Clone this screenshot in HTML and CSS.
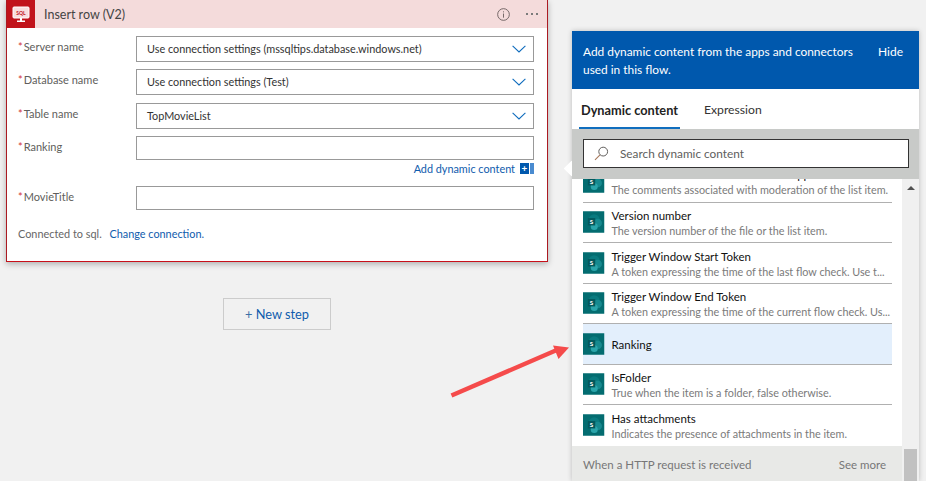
FILE: index.html
```html
<!DOCTYPE html>
<html lang="en">
<head>
<meta charset="utf-8">
<title>Insert row (V2)</title>
<link rel="stylesheet" href="styles.css">
</head>
<body>
<svg class="defs" width="0" height="0" aria-hidden="true">
  <symbol id="sp" viewBox="0 0 22 22">
    <rect width="22" height="22" fill="#036c70"/>
    <circle cx="11.5" cy="8.5" r="5.5" fill="#0a7a7f"/>
    <circle cx="15" cy="12" r="4.4" fill="#16898f"/>
    <circle cx="11.5" cy="15.5" r="3.6" fill="#2aa5ab"/>
    <rect x="5" y="7" width="7.5" height="7.5" fill="#04585c"/>
    <text x="8.7" y="13" class="sp-letter">S</text>
  </symbol>
  <symbol id="chev" viewBox="0 0 14 8">
    <path d="M.6.8 7 7 13.4.8" fill="none" stroke="#0f6cbd" stroke-width="1.1"/>
  </symbol>
</svg>
<div class="page">
  <main class="canvas">
    <section class="card">
      <header class="card-head">
        <div class="card-icon">
          <svg width="18" height="17" viewBox="0 0 18 17">
            <rect x="1" y="1" width="16" height="11" rx="1" fill="#f8dede" stroke="#fff"/>
            <text x="9" y="8.7" class="sql">SQL</text>
            <path d="M8 12h2v2.4h3V16H5v-1.6h3z" fill="#fff"/>
          </svg>
        </div>
        <h1 class="card-title">Insert row (V2)</h1>
        <svg class="info" width="13" height="13" viewBox="0 0 14 14">
          <circle cx="7" cy="7" r="6.3" fill="none" stroke="#6b5f5f"/>
          <path d="M7 6v4.4M7 3.6v1.1" stroke="#6b5f5f" fill="none"/>
        </svg>
        <div class="more"><i></i><i></i><i></i></div>
      </header>
      <div class="card-body">
        <div class="field gap7">
          <label class="label"><span class="req">*</span>Server name</label>
          <div class="input select"><span>Use connection settings (mssqltips.database.windows.net)</span><svg class="chev"><use href="#chev"/></svg></div>
        </div>
        <div class="field gap8">
          <label class="label"><span class="req">*</span>Database name</label>
          <div class="input select"><span>Use connection settings (Test)</span><svg class="chev"><use href="#chev"/></svg></div>
        </div>
        <div class="field gap7">
          <label class="label"><span class="req">*</span>Table name</label>
          <div class="input select"><span>TopMovieList</span><svg class="chev"><use href="#chev"/></svg></div>
        </div>
        <div class="field">
          <label class="label"><span class="req">*</span>Ranking</label>
          <div class="input text"></div>
        </div>
        <div class="add-row">
          <a class="link">Add dynamic content</a>
          <span class="add-badge"><b>+</b></span>
        </div>
        <div class="field">
          <label class="label"><span class="req">*</span>MovieTitle</label>
          <div class="input text"></div>
        </div>
        <p class="conn">Connected to sql. <a class="link conn-link">Change connection.</a></p>
      </div>
    </section>
    <button class="new-step"><span class="plus">+</span> New step</button>
  </main>

  <aside class="panel">
    <span class="notch"></span>
    <div class="panel-head">
      <p>Add dynamic content from the apps and connectors used in this flow.</p>
      <span class="hide">Hide</span>
    </div>
    <nav class="tabs">
      <span class="tab active">Dynamic content</span>
      <span class="tab">Expression</span>
    </nav>
    <div class="search-band">
      <div class="search">
        <svg width="15" height="15" viewBox="0 0 15 15">
          <circle cx="9.2" cy="5.6" r="4.4" fill="none" stroke="#605e5c" stroke-width="1"/>
          <path d="M6 8.8 1 13.8" stroke="#a5775b" stroke-width="1.1" fill="none"/>
        </svg>
        <span>Search dynamic content</span>
      </div>
    </div>
    <div class="panel-main">
      <div class="list-wrap">
        <ul class="list">
          <li class="row first">
            <svg class="sp"><use href="#sp"/></svg>
            <div class="row-text"><strong>Comments associated with content approval</strong><small>The comments associated with moderation of the list item.</small></div>
          </li>
          <li class="row">
            <svg class="sp"><use href="#sp"/></svg>
            <div class="row-text"><strong>Version number</strong><small>The version number of the file or the list item.</small></div>
          </li>
          <li class="row">
            <svg class="sp"><use href="#sp"/></svg>
            <div class="row-text"><strong>Trigger Window Start Token</strong><small>A token expressing the time of the last flow check. Use t...</small></div>
          </li>
          <li class="row">
            <svg class="sp"><use href="#sp"/></svg>
            <div class="row-text"><strong>Trigger Window End Token</strong><small>A token expressing the time of the current flow check. Us...</small></div>
          </li>
          <li class="row selected">
            <svg class="sp"><use href="#sp"/></svg>
            <div class="row-text"><strong>Ranking</strong></div>
          </li>
          <li class="row">
            <svg class="sp"><use href="#sp"/></svg>
            <div class="row-text"><strong>IsFolder</strong><small>True when the item is a folder, false otherwise.</small></div>
          </li>
          <li class="row last">
            <svg class="sp"><use href="#sp"/></svg>
            <div class="row-text"><strong>Has attachments</strong><small>Indicates the presence of attachments in the item.</small></div>
          </li>
        </ul>
        <footer class="list-foot">
          <span>When a HTTP request is received</span>
          <span>See more</span>
        </footer>
      </div>
      <div class="scrollbar">
        <span class="arrow-up"></span>
        <span class="thumb"></span>
      </div>
    </div>
  </aside>

  <svg class="pointer" width="130" height="60" viewBox="0 0 130 60">
    <path d="M1.5 55.5 108 9.5" stroke="#f54b4b" stroke-width="4.4" fill="none"/>
    <path d="M119 7.5 103 5.5 108.5 19z" fill="#f54b4b"/>
  </svg>
</div>
</body>
</html>
```
FILE: styles.css
```css
* { box-sizing: border-box; }
html, body { margin: 0; padding: 0; }
body {
  font-family: Lato, "Liberation Sans", sans-serif;
  font-size: 11px;
  color: #333;
  background: #f1f1f1;
}
.defs { position: absolute; }
.sp-letter { font: 700 6.5px Lato, sans-serif; fill: #fff; text-anchor: middle; }
.sql { font: 700 5px Lato, sans-serif; fill: #c1131b; text-anchor: middle; }

.page {
  position: relative;
  display: flex;
  width: 926px;
  height: 481px;
  overflow: hidden;
  background: #f1f1f1;
}
.canvas {
  width: 572px;
  flex: none;
  padding-left: 6px;
  display: flex;
  flex-direction: column;
  align-items: flex-start;
}

.card {
  width: 542px;
  height: 262px;
  background: #fff;
  border: 1px solid #ab1a22;
  border-bottom-color: #c8101a;
  border-top: 0;
  box-shadow: 0 2px 6px rgba(0,0,0,.28);
  flex: none;
}
.card-head {
  height: 28px;
  display: flex;
  align-items: center;
  background: #f4dbdb;
}
.card-icon {
  width: 28px;
  height: 28px;
  background: #c1131b;
  display: flex;
  align-items: center;
  justify-content: center;
}
.card-title {
  margin: 0 0 0 9px;
  flex: 1;
  font-size: 12.5px;
  font-weight: 400;
  color: #444;
}
.info { margin-right: 16px; }
.more { display: flex; gap: 3px; margin-right: 9px; }
.more i { width: 2px; height: 2px; background: #7a7a7a; }

.card-body { padding: 8px 13px 0 11px; }
.field { display: flex; }
.gap7 { margin-bottom: 7px; }
.gap8 { margin-bottom: 8px; }
.label { width: 118px; flex: none; padding-top: 4px; color: #605e5c; font-size: 11px; }
.req { color: #d13438; margin-right: 1px; }
.input {
  flex: 1;
  background: #fff;
  border: 1px solid #999;
  color: #333;
}
.select {
  height: 26px;
  display: flex;
  align-items: center;
  justify-content: space-between;
  padding: 0 7px 0 10px;
  font-size: 10.85px;
}
.select span { padding-bottom: 2px; }
.text { height: 24px; }
.chev { width: 14px; height: 8px; }

.add-row {
  height: 26px;
  display: flex;
  justify-content: flex-end;
  align-items: center;
  gap: 5px;
  padding-bottom: 9px;
}
.link { color: #0f5cad; font-size: 10.85px; }
.add-badge {
  width: 14px;
  height: 11px;
  background: linear-gradient(90deg, #0058ad 0 9px, #fff 9px 10px, #4a8bd0 10px);
  display: flex;
  color: #fff;
}
.add-badge b { width: 9px; font-size: 10px; line-height: 10px; text-align: center; }

.conn { margin: 17px 0 0; color: #666; font-size: 10.9px; }
.conn-link { margin-left: 5px; }

.new-step {
  margin: 36px 0 0 217px;
  width: 108px;
  height: 32px;
  background: #f1f1f1;
  border: 1px solid #ccc;
  font: 400 12.8px Lato, sans-serif;
  color: #0f5cad;
  padding: 0;
}
.plus { color: #3b6fa5; }

.panel {
  position: relative;
  width: 347px;
  height: 450px;
  margin-top: 31px;
  flex: none;
  display: flex;
  flex-direction: column;
  background: #fff;
  box-shadow: 0 0 5px rgba(0,0,0,.22);
}
.notch {
  position: absolute;
  left: -6px;
  top: 132px;
  width: 11px;
  height: 11px;
  background: #fff;
  transform: rotate(45deg);
}
.panel-head {
  height: 58px;
  flex: none;
  display: flex;
  justify-content: space-between;
  padding: 12px 16px 0 11px;
  background: #0058ad;
  color: #fff;
  font-size: 11.9px;
  line-height: 18px;
}
.panel-head p { margin: 0; width: 285px; }
.hide { font-size: 12px; }
.tabs {
  height: 40px;
  flex: none;
  display: flex;
  padding-left: 7px;
  gap: 22px;
}
.tab {
  padding: 13px 2px 0;
  font-size: 12.2px;
  color: #333;
}
.tab.active {
  font-size: 12.75px;
  font-weight: 700;
  color: #222;
  border-bottom: 2px solid #106ebe;
}
.search-band {
  position: relative;
  z-index: 1;
  height: 50px;
  flex: none;
  padding: 10px 10px 0 11px;
  background: #c8cac8;
}
.search {
  height: 29px;
  display: flex;
  align-items: center;
  gap: 11px;
  padding-left: 10px;
  background: #fff;
  border: 1px solid #333;
  font-size: 11.8px;
  color: #605e5c;
}
.panel-main { flex: 1; min-height: 0; display: flex; }
.list-wrap { width: 330px; display: flex; flex-direction: column; overflow: hidden; }
.list {
  flex: 1;
  min-height: 0;
  margin: 0;
  padding: 0 10px 0 11px;
  list-style: none;
}
.row {
  height: 40.5px;
  display: flex;
  align-items: center;
  gap: 7px;
  border-bottom: 1px solid #b0b0b0;
}
.row.first { margin-top: -17px; }
.row.first .row-text { padding-bottom: 2px; }
.row.last { border-bottom: 0; }
.row.selected { background: #e3effc; }
.sp { width: 21.5px; height: 22px; flex: none; }
.row-text { display: flex; flex-direction: column; gap: 1px; min-width: 0; padding-top: 3px; }
.row-text strong { font-size: 11.5px; font-weight: 400; color: #111; line-height: 14px; white-space: nowrap; }
.row-text small { font-size: 10.8px; color: #7a7a7a; line-height: 14px; white-space: nowrap; }
.list-foot {
  height: 35px;
  flex: none;
  display: flex;
  justify-content: space-between;
  align-items: center;
  padding: 2px 16px 0 11px;
  background: #e8e9e7;
  color: #777;
  font-size: 11.5px;
}
.scrollbar {
  width: 17px;
  background: #f0f0f0;
  display: flex;
  flex-direction: column;
  align-items: center;
  justify-content: space-between;
  padding-top: 7px;
}
.arrow-up {
  width: 0;
  height: 0;
  border: 4px solid transparent;
  border-top: 0;
  border-bottom: 4px solid #505050;
}
.thumb { width: 13px; height: 32px; background: #c1c1c1; }

.pointer {
  position: absolute;
  left: 450px;
  top: 340px;
}
```
